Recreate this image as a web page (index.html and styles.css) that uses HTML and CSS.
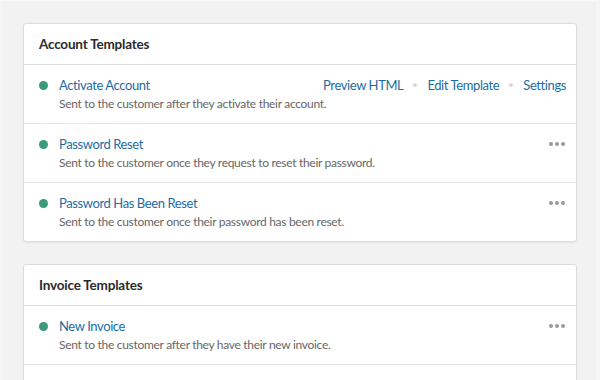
FILE: index.html
```html
<!DOCTYPE html>
<html lang="en">
<head>
	<meta charset="UTF-8">
	<meta name="viewport" content="width=device-width, initial-scale=1.0">
	<title>Email Templates</title>
	<link rel="stylesheet" href="styles.css">
</head>
<body>
	<section class="card">
		<header>Account Templates</header>
		<div class="row">
			<span class="dot"></span>
			<a href="#" class="name">Activate Account</a>
			<nav class="actions">
				<a href="#">Preview HTML</a>
				<span class="sep"></span>
				<a href="#">Edit Template</a>
				<span class="sep"></span>
				<a href="#">Settings</a>
			</nav>
			<p>Sent to the customer after they activate their account.</p>
		</div>
		<div class="row">
			<span class="dot"></span>
			<a href="#" class="name">Password Reset</a>
			<span class="more"><i></i><i></i><i></i></span>
			<p>Sent to the customer once they request to reset their password.</p>
		</div>
		<div class="row">
			<span class="dot"></span>
			<a href="#" class="name">Password Has Been Reset</a>
			<span class="more"><i></i><i></i><i></i></span>
			<p>Sent to the customer once their password has been reset.</p>
		</div>
	</section>

	<section class="card">
		<header>Invoice Templates</header>
		<div class="row">
			<span class="dot"></span>
			<a href="#" class="name">New Invoice</a>
			<span class="more"><i></i><i></i><i></i></span>
			<p>Sent to the customer after they have their new invoice.</p>
		</div>
		<div class="row">
			<span class="dot"></span>
			<a href="#" class="name">Invoice Paid</a>
			<span class="more"><i></i><i></i><i></i></span>
			<p>Sent to the customer once their invoice has been paid.</p>
		</div>
	</section>
</body>
</html>
```

FILE: styles.css
```css
*{
	margin: 0;
	padding: 0;
	box-sizing: border-box;
	font-family: "Lato", "Open Sans", sans-serif;
}

body{
	background-color: #f2f2f2;
	border-top: 1px solid #f8f8f8;
	border-right: 4px solid #f6f6f6;
	border-left: 2px solid #f6f6f6;
	height: 380px;
	overflow: hidden;
	padding: 22px 19px 0 21px;
}

.card{
	background-color: #fff;
	border: 1px solid #dcdcdc;
	border-radius: 3px;
	box-shadow: 0 1px 2px rgba(0,0,0,.06);
	margin-bottom: 22px;
}

.card header{
	padding: 11px 15px;
	font-size: 13.5px;
	letter-spacing: -0.2px;
	line-height: 18px;
	font-weight: 700;
	color: #2b2b2b;
	border-bottom: 1px solid #dedede;
}

.row{
	display: grid;
	grid-template-columns: 9px 1fr auto;
	column-gap: 11px;
	padding: 11px 10px 10px 15px;
	border-bottom: 1px solid #e6e6e6;
}

.row:last-child{
	border-bottom: none;
}

.dot{
	width: 9px;
	height: 9px;
	border-radius: 50%;
	background-color: #3b9b77;
	align-self: center;
}

.row .name, .actions a{
	font-size: 13px;
	letter-spacing: -0.4px;
	line-height: 18px;
	color: #1c6ca3;
	text-decoration: none;
}

.row p{
	grid-column: 2 / 4;
	font-size: 12px;
	letter-spacing: -0.3px;
	line-height: 19px;
	color: #666;
}

.actions{
	display: flex;
	align-items: center;
	gap: 10px;
}

.actions .sep{
	width: 4px;
	height: 4px;
	border-radius: 50%;
	background-color: #d8d8d8;
}

.more{
	display: flex;
	align-self: center;
	gap: 2px;
	padding-right: 1px;
}

.more i{
	width: 4px;
	height: 4px;
	border-radius: 50%;
	background-color: #9a9a9a;
}
```
